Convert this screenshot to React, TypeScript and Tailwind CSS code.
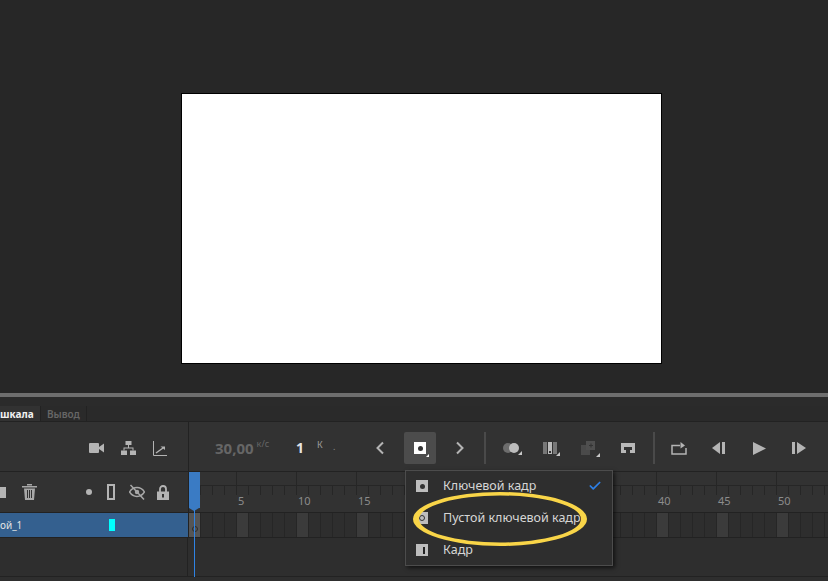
import { Check } from "lucide-react"

const FRAMES = Array.from({ length: 54 }, (_, i) => i + 1)
const LABELS = [5, 10, 15, 20, 25, 30, 35, 40, 45, 50]

function Slot({ w, children }: { w: number; children?: React.ReactNode }) {
  return (
    <div className="flex shrink-0 items-center justify-center" style={{ width: w }}>
      {children}
    </div>
  )
}

function Corner() {
  return <span className="absolute -bottom-[2px] -right-[3px] h-0 w-0 border-b-[4px] border-l-[4px] border-b-[#c8c8c8] border-l-transparent" />
}

function Chevron({ left }: { left?: boolean }) {
  return (
    <svg width="10" height="14" viewBox="0 0 10 14" fill="none" stroke="#b4b4b4" strokeWidth="2">
      <path d={left ? "M8 1.5 2.5 7 8 12.5" : "M2 1.5 7.5 7 2 12.5"} />
    </svg>
  )
}

function TopTools() {
  return (
    <div className="flex h-[49px] items-stretch">
      <div className="flex w-[188px] shrink-0 items-center pl-[80px] pt-[3px]">
        <Slot w={32}>
          <svg width="15" height="10" viewBox="0 0 15 10" fill="#b4b4b4"><rect width="10" height="10" rx="1" /><path d="M10 4 15 .5v9L10 6z" /></svg>
        </Slot>
        <Slot w={32}>
          <svg width="15" height="14" viewBox="0 0 15 14" fill="#b4b4b4">
            <rect x="4.5" y="0" width="6" height="4" />
            <rect x="0" y="9.5" width="6" height="4.5" />
            <rect x="9" y="9.5" width="6" height="4.5" />
            <path d="M7 4h1v2.500h4.500v3h-1V7.500H3.500v2h-1v-3H7z" />
          </svg>
        </Slot>
        <Slot w={32}>
          <svg width="15" height="15" viewBox="0 0 15 15" fill="none" stroke="#b4b4b4">
            <path d="M.5 0v14.500H14" />
            <path d="M3 12 10 7" strokeWidth="1.500" />
            <path d="M7.500 5.500H12V9z" fill="#b4b4b4" stroke="none" />
          </svg>
        </Slot>
      </div>
      <div className="w-px bg-[#222222]" />
      <div className="flex flex-1 items-center pt-[3px]">
        <div className="ml-[26px] flex w-[81px] shrink-0 items-start">
          <span className="text-[15px] font-bold leading-none text-[#666666]">30,00</span>
          <span className="ml-[3px] -mt-[2px] text-[9px] leading-none text-[#666666]">к/с</span>
        </div>
        <span className="w-[21px] shrink-0 text-[14px] font-bold leading-none text-[#e4e4e4]">1</span>
        <span className="-mt-[8px] w-[16px] shrink-0 text-[9px] leading-none text-[#a0a0a0]">К</span>
        <span className="-mt-[4px] w-[32px] shrink-0 text-[9px] leading-none text-[#8a8a8a]">.</span>
        <Slot w={30}><Chevron left /></Slot>
        <div className="relative mx-[9px] flex h-[32px] w-[32px] shrink-0 items-center justify-center rounded-[2px] bg-[#4c4c4c]">
          <div className="flex h-[12px] w-[12px] items-center justify-center bg-white">
            <div className="h-[5px] w-[5px] rounded-full bg-[#333333]" />
          </div>
          <span className="absolute bottom-[7px] right-[7px] h-0 w-0 border-b-[3px] border-l-[3px] border-b-white border-l-transparent" />
        </div>
        <Slot w={30}><Chevron /></Slot>
        <div className="ml-[9px] h-[32px] w-[2px] shrink-0 bg-[#4a4a4a]" />
        <Slot w={49}>
          <div className="relative flex items-center">
            <span className="h-[10px] w-[10px] rounded-full bg-[#6d6d6d]" />
            <span className="-ml-[4px] h-[10px] w-[10px] rounded-full bg-[#bcbcbc]" />
            <Corner />
          </div>
        </Slot>
        <Slot w={30}>
          <div className="relative flex h-[12px] gap-[1px]">
            <span className="w-[4px] bg-[#777777]" />
            <span className="flex w-[4px] items-end justify-center bg-[#bcbcbc]"><span className="mb-[1px] h-[2px] w-[2px] bg-[#333333]" /></span>
            <span className="w-[4px] bg-[#777777]" />
            <Corner />
          </div>
        </Slot>
        <Slot w={48}>
          <div className="relative">
            <svg width="16" height="14" viewBox="0 0 16 14"><rect x="0" y="4" width="9" height="10" fill="#4a4a4a" /><rect x="5" y="0" width="9" height="9" fill="#4f4f4f" /><path d="M8 4h4v1H8zM9.500 2.500h1v4h-1z" fill="#333333" /></svg>
            <Corner />
          </div>
        </Slot>
        <Slot w={30}>
          <svg width="14" height="10" viewBox="0 0 14 10"><path d="M0 0h14v10H9V7h2V4H3v3h2v3H0z" fill="#b8b8b8" /></svg>
        </Slot>
        <div className="ml-[10px] h-[32px] w-[2px] shrink-0 bg-[#4a4a4a]" />
        <Slot w={48}>
          <svg width="16" height="13" viewBox="0 0 16 13" fill="none" stroke="#b4b4b4" strokeWidth="1.500">
            <path d="M9 3.500H1v8.500h14V6" />
            <path d="M9.500 0 14 3.500 9.500 6.500z" fill="#b4b4b4" stroke="none" />
          </svg>
        </Slot>
        <Slot w={32}>
          <svg width="14" height="12" viewBox="0 0 14 12" fill="#b4b4b4"><path d="M8 0v12L0 6z" /><rect x="10" y="0" width="3" height="12" /></svg>
        </Slot>
        <Slot w={48}>
          <svg width="13" height="13" viewBox="0 0 13 13" fill="#b4b4b4"><path d="M0 0 13 6.500 0 13z" /></svg>
        </Slot>
        <Slot w={32}>
          <svg width="14" height="12" viewBox="0 0 14 12" fill="#b4b4b4"><rect x="0" y="0" width="3" height="12" /><path d="M5 0l9 6-9 6z" /></svg>
        </Slot>
      </div>
    </div>
  )
}

function LayerHeader() {
  return (
    <div className="flex h-[40px] w-[188px] shrink-0 items-center">
      <div className="h-[11px] w-[6px] bg-[#b4b4b4]" />
      <div className="ml-[16px]">
        <svg width="15" height="16" viewBox="0 0 15 16" fill="#a8a8a8">
          <rect x="0" y="2" width="15" height="1.500" />
          <rect x="5" y="0" width="5" height="1.500" />
          <path d="M2 4.500h11L12 16H3z" />
          <path d="M5 6h1v8H5zM7 6h1v8H7zM9 6h1v8H9z" fill="#323232" />
        </svg>
      </div>
      <div className="ml-[49px] h-[6px] w-[6px] rounded-full bg-[#b4b4b4]" />
      <div className="ml-[15px] h-[16px] w-[8px] border-2 border-[#b4b4b4]" />
      <div className="ml-[14px]">
        <svg width="16" height="16" viewBox="0 0 16 16" fill="none" stroke="#a8a8a8" strokeWidth="1.500">
          <path d="M.5 8C3 4 5.500 3.500 8 3.500S13 4 15.500 8C13 12 10.500 12.500 8 12.500S3 12 .5 8z" />
          <circle cx="8" cy="8" r="2.200" fill="#a8a8a8" stroke="none" />
          <path d="M1.500 1 15 15.500" />
        </svg>
      </div>
      <div className="ml-[12px]">
        <svg width="12" height="15" viewBox="0 0 12 15" fill="none">
          <path d="M3 7V4a3 3 0 0 1 6 0v3" stroke="#b4b4b4" strokeWidth="1.800" />
          <rect x="0" y="6.500" width="12" height="8.500" fill="#b4b4b4" />
          <rect x="5" y="9" width="2" height="3.500" fill="#323232" />
        </svg>
      </div>
    </div>
  )
}

function Ruler() {
  return (
    <div className="flex h-[40px] flex-1 flex-col overflow-hidden">
      <div className="flex h-[14px] border-b border-[#262626]">
        <div className="h-full w-[48px] shrink-0 border-r border-[#262626]" />
        {LABELS.map((n) => (
          <div key={n} className="h-full w-[60px] shrink-0 border-r border-[#262626]" />
        ))}
      </div>
      <div className="flex h-[9px]">
        {FRAMES.map((n) => (
          <div key={n} className="h-full w-[12px] shrink-0 border-r border-[#262626]" />
        ))}
      </div>
      <div className="flex pl-[48px]">
        {LABELS.map((n) => (
          <span key={n} className="w-[60px] shrink-0 pl-px text-[11px] leading-[12px] text-[#8c8c8c]">{n}</span>
        ))}
      </div>
    </div>
  )
}

function FrameRow() {
  return (
    <div className="flex h-[24px] flex-1 overflow-hidden">
      {FRAMES.map((n) => {
        const bg = n === 1 ? "bg-[#555555]" : n % 5 === 0 ? "bg-[#3b3b3b]" : "bg-[#2e2e2e]"
        return (
          <div key={n} className={`flex h-full w-[12px] shrink-0 items-end justify-center border-r border-[#262626] ${bg}`}>
            {n === 1 && <span className="mb-[5px] h-[6px] w-[6px] rounded-full border border-[#2c2c2c]" />}
          </div>
        )
      })}
    </div>
  )
}

function KeyIcon({ kind }: { kind: "key" | "blank" | "frame" }) {
  return (
    <div className="flex h-[12px] w-[12px] shrink-0 items-center justify-center bg-[#bdbdbd]">
      {kind === "key" && <span className="h-[5px] w-[5px] rounded-full bg-[#333333]" />}
      {kind === "blank" && <span className="h-[6px] w-[6px] rounded-full border-[1.5px] border-[#333333] bg-[#bdbdbd]" />}
      {kind === "frame" && <span className="ml-[3px] h-[7px] w-[2px] bg-[#222222]" />}
    </div>
  )
}

function MenuItem({ kind, label, checked }: { kind: "key" | "blank" | "frame"; label: string; checked?: boolean }) {
  return (
    <div className="flex h-[32px] items-center pl-[10px] pr-[10px] first:-mt-px">
      <KeyIcon kind={kind} />
      <span className="ml-[15px] flex-1 text-[12.5px] leading-none text-[#d6d6d6]">{label}</span>
      {checked && <Check className="text-[#2d7fe6]" size={14} strokeWidth={3} />}
    </div>
  )
}

export default function App() {
  return (
    <div className="relative h-[581px] w-[828px] overflow-hidden bg-[#272727] font-['Noto_Sans','Open_Sans',sans-serif]">
      <div className="h-[393px] pl-[181px] pt-[93px]">
        <div className="h-[271px] w-[481px] border border-black bg-white" />
      </div>
      <div className="h-[4px] bg-[#6e6e6e]" />
      <div className="h-[9px] bg-[#2b2b2b]" />
      <div className="flex h-[16px] items-stretch border-b border-[#222222] bg-[#2a2a2a]">
        <div className="flex w-[40px] items-center bg-[#323232] pt-px text-[10px] font-bold leading-none text-[#f0f0f0]">шкала</div>
        <div className="flex w-[47px] items-center border-x border-[#222222] pl-[6px] pt-px text-[10px] font-semibold leading-none text-[#666666]">Вывод</div>
      </div>
      <div className="bg-[#323232]">
        <TopTools />
        <div className="border-y border-[#222222]">
          <div className="flex">
            <LayerHeader />
            <div className="w-px self-stretch bg-[#222222]" />
            <Ruler />
          </div>
        </div>
        <div className="flex border-b border-[#222222]">
          <div className="flex h-[24px] w-[188px] shrink-0 items-center bg-[#34608f] text-[10px] leading-none text-[#e4e4e4]">
            <span className="w-[109px]">ой_1</span>
            <span className="h-[12px] w-[6px] bg-[#00ffff]" />
          </div>
          <div className="w-px self-stretch bg-[#222222]" />
          <FrameRow />
        </div>
        <div className="flex h-[39px] border-b border-[#222222] bg-[#2e2e2e]">
          <div className="w-[188px] border-r border-[#222222]" />
        </div>
        <div className="h-[4px] bg-[#2e2e2e]" />
      </div>

      {/* playhead */}
      <div className="absolute left-[189px] top-[472px] h-[36px] w-[11px] bg-[#3a7bc4]" />
      <div className="absolute left-[189px] top-[508px] h-0 w-0 border-x-[5.5px] border-t-[3px] border-x-transparent border-t-[#3a7bc4]" />
      <div className="absolute left-[194px] top-[510px] h-[67px] w-px bg-[#2f83e4]" />

      {/* frame type menu */}
      <div className="absolute left-[405px] top-[470px] h-[96px] w-[208px] border border-[#4c4c4c] bg-[#2e2e2e] shadow-[2px_2px_4px_rgba(0,0,0,0.6)]">
        <MenuItem kind="key" label="Ключевой кадр" checked />
        <MenuItem kind="blank" label="Пустой ключевой кадр" />
        <MenuItem kind="frame" label="Кадр" />
      </div>

      {/* hand drawn highlight, thicker at the ends */}
      <svg className="absolute left-[413px] top-[492px]" width="174" height="54" viewBox="0 0 174 54">
        <path
          fillRule="evenodd"
          fill="#f9d548"
          d="M0 27a87 27 0 1 0 174 0a87 27 0 1 0 -174 0z M6 27a81 23.500 0 1 0 162 0a81 23.500 0 1 0 -162 0z"
        />
      </svg>
    </div>
  )
}
